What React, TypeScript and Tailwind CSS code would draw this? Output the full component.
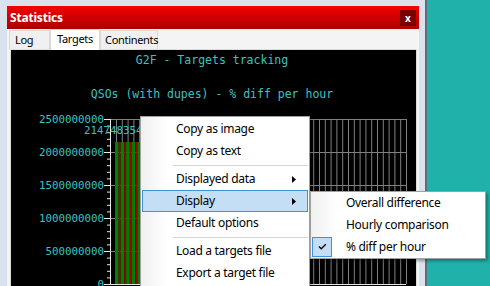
import React from "react";

const MONO = '"DejaVu Sans Mono", "Liberation Mono", monospace';
const CYAN = "#3ac2c2";

const gridX = Array.from({ length: 51 }, (_, i) => 105 + i * 5.8);
const majors = [69, 102, 135, 168, 201, 234];
const minors = Array.from({ length: 26 }, (_, i) => 69 + i * 6.6);
const labels = ["2500000000", "2000000000", "1500000000", "1000000000", "500000000", "0"];

const Chart = () => (
  <svg width="405" height="236" className="block">
    <text x="201" y="10" fill={CYAN} fontFamily={MONO} fontSize="11.5" textAnchor="middle" dominantBaseline="central">
      G2F - Targets tracking
    </text>
    <text x="201" y="44" fill={CYAN} fontFamily={MONO} fontSize="11.5" textAnchor="middle" dominantBaseline="central">
      QSOs (with dupes) - % diff per hour
    </text>

    {/* grid */}
    {gridX.map((x) => (
      <line key={x} x1={x + 0.5} y1="69" x2={x + 0.5} y2="234" stroke="#808080" />
    ))}
    {majors.slice(0, 5).map((y) => (
      <line key={y} x1="99" y1={y + 0.5} x2="395" y2={y + 0.5} stroke="#808080" />
    ))}

    {/* bars */}
    {Array.from({ length: 7 }, (_, i) => (
      <g key={i}>
        <rect x={104 + i * 5.6} y="92" width="3.6" height="142" fill="#008000" />
        <rect x={107.6 + i * 5.6} y="92" width="2" height="142" fill="#a00000" />
      </g>
    ))}

    {/* axes */}
    <line x1="99.5" y1="69" x2="99.5" y2="235" stroke="#e8e8e8" />
    <line x1="99" y1="234.5" x2="395" y2="234.5" stroke="#e8e8e8" />
    {minors.map((y, i) => (
      <line key={y} x1={i % 5 === 0 ? 93 : 96} y1={y + 0.5} x2="99" y2={y + 0.5} stroke="#e8e8e8" />
    ))}
    {labels.map((l, i) => (
      <text key={l} x="93" y={majors[i]} fill={CYAN} fontFamily={MONO} fontSize="10.8" textAnchor="end" dominantBaseline="central">
        {l}
      </text>
    ))}
    <text x="73" y="80" fill={CYAN} fontFamily={MONO} fontSize="10.8" dominantBaseline="central">
      2147483547
    </text>
  </svg>
);

const Arrow = () => (
  <svg width="4" height="7" className="absolute right-[11px] top-[7px]">
    <path d="M0 0 L4 3.5 L0 7 Z" fill="#000" />
  </svg>
);

const Item = ({ label, active, arrow }: { label: string; active?: boolean; arrow?: boolean }) => (
  <div
    className={`relative mx-px h-[22px] flex items-center pl-[33px] border ${
      active ? "bg-[#c4def6] border-[#3f93dd]" : "border-transparent"
    }`}
  >
    {label}
    {arrow && <Arrow />}
  </div>
);

const Sep = () => (
  <div className="h-[6px] flex items-center pl-[32px] pr-px">
    <div className="h-px w-full bg-[#d5d5d5]" />
  </div>
);

const App = () => {
  return (
    <div className="relative w-[490px] h-[286px] overflow-hidden flex bg-[#d9e2ed] font-['Noto_Sans','Open_Sans',sans-serif] text-black">
      <div className="w-[419px] shrink-0 pl-[7px] pt-[6px] flex flex-col">
        <div className="flex-1 flex flex-col bg-[#f4f4f4]">
          {/* title bar */}
          <div className="h-[23px] shrink-0 bg-gradient-to-b from-[#f40000] to-[#ae0000] flex items-center justify-between px-[3px]">
            <span className="text-white font-bold text-[12px] tracking-[-0.2px]">Statistics</span>
            <div className="w-[16px] h-[16px] bg-[#7a0000] flex items-center justify-center text-white text-[10px] font-bold leading-none">
              x
            </div>
          </div>

          {/* tabs */}
          <div className="h-[20px] shrink-0 flex items-end pl-[2px] text-[11px] tracking-[-0.3px] relative z-10">
            <div className="h-[19px] w-[41px] border border-b-0 border-[#d9d9d9] bg-[#f0f0f0] flex items-center pl-[5px]">Log</div>
            <div className="h-[21px] w-[50px] -mb-px border border-b-0 border-[#d9d9d9] bg-white flex items-center pl-[6px] pb-[2px]">Targets</div>
            <div className="h-[19px] w-[58px] border border-b-0 border-[#d9d9d9] bg-[#f0f0f0] flex items-center pl-[4px]">Continents</div>
          </div>

          {/* panel */}
          <div className="ml-[3px] w-[407px] flex-1 border border-[#dcdcdc] bg-black overflow-hidden">
            <Chart />
          </div>
        </div>
      </div>
      <div className="w-[6px] shrink-0 bg-[#d9e2ed]" />
      <div className="w-[2px] shrink-0 bg-[#5f6b78]" />
      <div className="flex-1 bg-[#20b2aa]" />

      {/* context menu */}
      <div className="absolute left-[140px] top-[116px] w-[170px] h-[185px] bg-white border border-[#a0a0a0] pt-px text-[12px] tracking-[-0.3px] shadow-[2px_2px_3px_rgba(0,0,0,0.25)]">
        <div className="absolute left-0 top-0 bottom-0 w-[26px] bg-gradient-to-r from-[#f0f0f0] to-white" />
        <div className="relative">
          <Item label="Copy as image" />
          <Item label="Copy as text" />
          <Sep />
          <Item label="Displayed data" arrow />
          <Item label="Display" active arrow />
          <Item label="Default options" />
          <Sep />
          <Item label="Load a targets file" />
          <Item label="Export a target file" />
        </div>
      </div>

      {/* submenu */}
      <div className="absolute left-[310px] top-[191px] w-[176px] bg-white border border-[#a0a0a0] text-[12px] tracking-[-0.3px] shadow-[2px_2px_3px_rgba(0,0,0,0.35)]">
        <div className="absolute left-0 top-0 bottom-0 w-[26px] bg-gradient-to-r from-[#f0f0f0] to-white" />
        <div className="relative">
          <Item label="Overall difference" />
          <Item label="Hourly comparison" />
          <div className="relative mx-px h-[22px] flex items-center pl-[33px] border border-transparent">
            <div className="absolute left-[-1px] top-0 w-[20px] h-[20px] bg-[#c4def6] border border-[#3f93dd]">
              <svg width="18" height="18" className="block">
                <path d="M6 8.5 L8.3 10.8 L12.8 6.3" stroke="#000" strokeWidth="1.3" fill="none" />
              </svg>
            </div>
            % diff per hour
          </div>
        </div>
      </div>
    </div>
  );
};

export default App;
